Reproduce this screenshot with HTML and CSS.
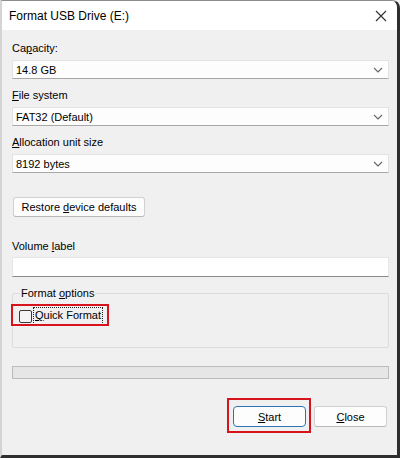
FILE: index.html
```html
<!DOCTYPE html>
<html>
<head>
<meta charset="utf-8">
<link rel="stylesheet" href="styles.css">
</head>
<body>
<div class="window">
  <div class="titlebar">
    <span class="title">Format USB Drive (E:)</span>
    <svg class="close-x" width="12" height="12" viewBox="0 0 12 12"><path d="M1 1 L11 11 M11 1 L1 11" stroke="#333" stroke-width="1.2" fill="none"/></svg>
  </div>
  <div class="content">
    <div class="label l-first">Ca<u>p</u>acity:</div>
    <div class="select"><span>14.8 GB</span><svg class="chev" width="10" height="6" viewBox="0 0 10 6"><path d="M1 1 L5 5 L9 1" stroke="#666" stroke-width="1.1" fill="none"/></svg></div>
    <div class="label"><u>F</u>ile system</div>
    <div class="select"><span>FAT32 (Default)</span><svg class="chev" width="10" height="6" viewBox="0 0 10 6"><path d="M1 1 L5 5 L9 1" stroke="#666" stroke-width="1.1" fill="none"/></svg></div>
    <div class="label"><u>A</u>llocation unit size</div>
    <div class="select"><span>8192 bytes</span><svg class="chev" width="10" height="6" viewBox="0 0 10 6"><path d="M1 1 L5 5 L9 1" stroke="#666" stroke-width="1.1" fill="none"/></svg></div>
    <div class="restore-row"><button class="btn restore">Restore <u>d</u>evice defaults</button></div>
    <div class="label l-volume">Volume <u>l</u>abel</div>
    <div class="input"></div>
    <fieldset class="group">
      <legend>Format <u>o</u>ptions</legend>
      <div class="check-row">
        <span class="checkbox"></span>
        <span class="check-label"><u>Q</u>uick Format</span>
      </div>
    </fieldset>
    <div class="progress"></div>
    <div class="buttons">
      <button class="btn primary"><u>S</u>tart</button>
      <button class="btn"><u>C</u>lose</button>
    </div>
  </div>
</div>
</body>
</html>
```
FILE: styles.css
```css
html, body {
  margin: 0;
  padding: 0;
  background: #f0f0f0;
}
body {
  font-family: "Liberation Sans", Arial, sans-serif;
  font-size: 11px;
  color: #000;
}
.window {
  width: 400px;
  height: 458px;
  box-sizing: border-box;
  display: flex;
  flex-direction: column;
  border-top: 1px solid #8c8c8c;
  border-left: 2px solid #d4d4d4;
  border-right: 3px solid #2e2e2e;
  border-bottom: 3px solid #2e2e2e;
  border-top-right-radius: 8px;
  overflow: hidden;
  background: #f0f0f0;
}
.titlebar {
  height: 29px;
  background: #fff;
  display: flex;
  align-items: center;
  justify-content: space-between;
  padding: 0 9px 0 7px;
  flex: none;
}
.title {
  font-size: 12px;
  padding-top: 1px;
}
.close-x {
  display: block;
  margin-right: 1px;
}
.content {
  flex: 1;
  padding: 0 8px 0 10px;
  display: flex;
  flex-direction: column;
}
.label {
  height: 16px;
  line-height: 16px;
  margin-top: 8px;
}
.l-first {
  margin-top: 10px;
}
.select {
  margin-top: 4px;
  height: 19px;
  box-sizing: border-box;
  background: #fdfdfd;
  border: 1px solid #e3e3e3;
  border-bottom-color: #a8a8a8;
  display: flex;
  align-items: center;
  justify-content: space-between;
  padding: 0 5px 0 3px;
}
.chev {
  display: block;
}
.restore-row {
  margin-top: 24px;
  display: flex;
}
.btn {
  font-family: "Liberation Sans", Arial, sans-serif;
  font-size: 11px;
  color: #000;
  background: #fdfdfd;
  border: 1px solid #d0d0d0;
  border-bottom-color: #b8b8b8;
  border-radius: 3px;
  height: 20px;
  box-sizing: border-box;
  padding: 0;
  margin: 0;
}
.restore {
  width: 132px;
  margin-left: 1px;
}
.l-volume {
  margin-top: 21px;
}
.input {
  margin-top: 3px;
  height: 20px;
  box-sizing: border-box;
  background: #fff;
  border: 1px solid #e6e6e6;
  border-bottom-color: #8a8a8a;
}
.group {
  margin: 9px 0 0 0;
  padding: 6px 0 0 6px;
  height: 62px;
  box-sizing: border-box;
  border: 1px solid #dcdcdc;
  border-radius: 2px;
  min-width: 0;
}
.group legend {
  padding: 0 1px;
  margin-left: 1px;
  line-height: 14px;
}
.check-row {
  position: relative;
  display: flex;
  align-items: center;
  height: 18px;
  margin-top: 1px;
}
.check-row::after {
  content: "";
  position: absolute;
  left: -8px;
  top: -3px;
  width: 98px;
  height: 22px;
  box-sizing: border-box;
  border: 2px solid #d7141c;
}
.checkbox {
  width: 13px;
  height: 13px;
  box-sizing: border-box;
  border: 1px solid #3a3a3a;
  border-radius: 2px;
  background: #f4f4f4;
  flex: none;
}
.check-label {
  margin-left: 1px;
  border: 1px dotted #222;
  padding: 1px 1px 2px 1px;
  line-height: 13px;
}
.progress {
  margin-top: 18px;
  height: 13px;
  box-sizing: border-box;
  background: #e6e6e6;
  border: 1px solid #bcbcbc;
}
.buttons {
  margin-top: 27px;
  display: flex;
  justify-content: flex-end;
  gap: 8px;
  padding-right: 2px;
}
.buttons .btn {
  width: 73px;
  height: 21px;
}
.btn.primary {
  position: relative;
  border: 1px solid #2f73b7;
  border-radius: 4px;
}
.btn.primary::after {
  content: "";
  position: absolute;
  left: -7px;
  top: -9px;
  width: 84px;
  height: 35px;
  box-sizing: border-box;
  border: 2px solid #d7141c;
}
```
